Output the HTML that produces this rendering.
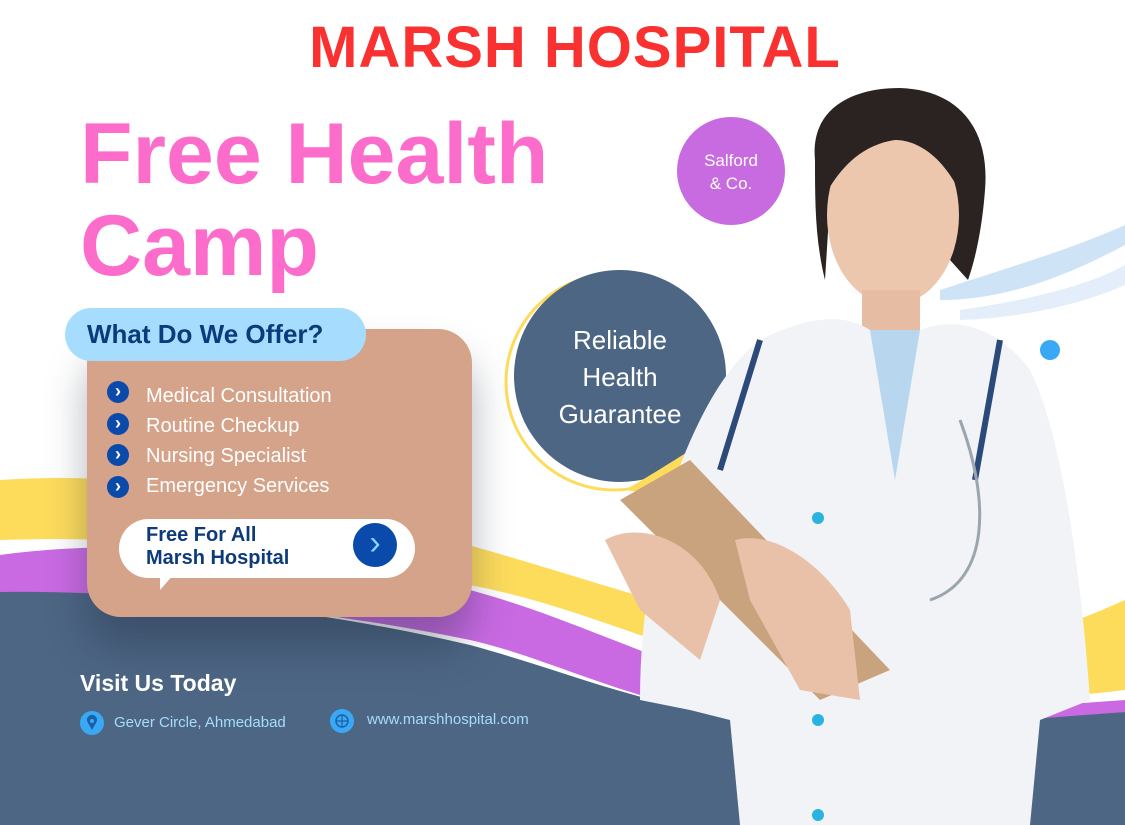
<!DOCTYPE html>
<html><head><meta charset="utf-8"><style>
*{margin:0;padding:0;box-sizing:border-box}
body{width:1125px;height:825px;overflow:hidden;background:#fff;position:relative;font-family:"Liberation Sans",sans-serif}
.a{position:absolute}
.b{position:absolute;left:107px;width:22px;height:22px;border-radius:50%;background:#0a4aab;color:#fff;font-size:18px;text-align:center;line-height:20px;font-weight:bold}
</style></head><body>
<svg class="a" style="left:0;top:0" width="1125" height="825">
<path d="M0 480 C150 470 300 500 450 540 C600 580 750 640 900 650 C1000 655 1080 620 1125 600 L1125 690 C1050 700 950 700 850 690 C700 670 600 610 470 585 C300 550 150 535 0 540Z" fill="#fddc5c"/>
<path d="M0 555 C150 535 330 555 470 590 C600 625 700 690 850 705 C950 715 1050 705 1125 700 L1125 712 C1000 725 900 730 800 725 C650 715 560 660 470 640 C300 605 150 595 0 600Z" fill="#c96ae3"/>
<path d="M0 592 C150 590 320 610 470 645 C580 675 650 710 780 722 C900 730 1020 720 1125 712 L1125 825 L0 825Z" fill="#4d6684"/>
<path d="M940 290 C1000 270 1070 250 1125 225 L1125 245 C1060 280 1000 300 940 300Z" fill="#cfe3f7"/>
<path d="M960 310 C1030 300 1090 285 1125 265 L1125 285 C1080 305 1020 318 960 320Z" fill="#e3eefa"/>
<circle cx="1050" cy="350" r="10" fill="#3aa9f5"/>
<circle cx="731" cy="171" r="54" fill="#c86ae0"/>
<circle cx="614" cy="382" r="108" fill="none" stroke="#fddc5c" stroke-width="3"/>
<circle cx="620" cy="376" r="106" fill="#4d6684"/>
<path d="M625 490 C660 470 690 450 715 435 L700 480 C680 490 650 495 625 490Z" fill="#fddc5c"/>
<path d="M815 160 C810 110 850 88 900 88 C960 90 990 130 985 190 C982 230 975 260 968 280 L950 260 C960 200 955 150 910 135 C870 128 835 150 830 200 L825 280 C815 240 815 200 815 160Z" fill="#2b2321"/>
<ellipse cx="893" cy="215" rx="66" ry="90" fill="#ecc7ae"/>
<path d="M828 190 C835 130 880 110 912 120 C950 130 968 170 970 215 C950 160 920 140 895 140 C860 145 840 170 828 190Z" fill="#2b2321"/>
<rect x="862" y="290" width="58" height="55" fill="#e6bda3"/>
<path d="M760 340 C800 320 840 310 870 330 L920 330 C960 315 1000 330 1030 370 C1060 430 1080 560 1090 700 L1040 720 L1030 825 L740 825 L730 720 L690 710 L640 700 C640 600 660 500 700 420 C720 380 740 355 760 340Z" fill="#f1f3f6"/>
<path d="M870 330 L895 480 L920 330Z" fill="#b8d7ee"/>
<path d="M760 340 L720 470 M1000 340 L975 480" stroke="#2b4a7a" stroke-width="6" fill="none"/>
<path d="M960 420 C990 500 990 580 930 600" stroke="#9aa5ad" stroke-width="3" fill="none"/>
<path d="M620 500 L690 460 L890 670 L820 700Z" fill="#c9a37d"/>
<path d="M605 540 C640 520 700 540 720 600 L700 660 L640 610Z" fill="#e9c1a8"/>
<path d="M735 540 C770 530 820 560 850 610 L860 700 L800 690 L750 600Z" fill="#e9c1a8"/>
<circle cx="818" cy="518" r="6" fill="#2bb3e0"/><circle cx="818" cy="720" r="6" fill="#2bb3e0"/><circle cx="818" cy="815" r="6" fill="#2bb3e0"/>
</svg>
<div class="a" style="left:0;width:1150px;top:14px;text-align:center;font-size:58px;font-weight:bold;color:#fa3131;letter-spacing:1px">MARSH HOSPITAL</div>
<div class="a" style="left:80px;top:108px;font-size:86px;font-weight:bold;color:#fc6ccb;line-height:92px">Free Health<br>Camp</div>
<div class="a" style="left:677px;top:149px;width:108px;text-align:center;font-size:17px;color:#fff;line-height:23px">Salford<br>&amp; Co.</div>
<div class="a" style="left:520px;top:322px;width:200px;text-align:center;font-size:26px;color:#fff;line-height:37px">Reliable<br>Health<br>Guarantee</div>
<div class="a" style="left:87px;top:329px;width:385px;height:288px;background:#d4a389;border-radius:34px;box-shadow:0 30px 40px rgba(30,40,60,.35)"></div>
<div class="a" style="left:65px;top:308px;width:301px;height:53px;background:#a6dcfd;border-radius:27px;font-size:26px;font-weight:bold;color:#0c3a7a;padding:11px 0 0 22px">What Do We Offer?</div>
<div class="a" style="left:146px;top:381px;font-size:20px;color:#fff;line-height:30px">
<div>Medical Consultation</div><div>Routine Checkup</div><div>Nursing Specialist</div><div>Emergency Services</div></div>
<div class="b" style="top:381px">›</div><div class="b" style="top:413px">›</div><div class="b" style="top:444px">›</div><div class="b" style="top:476px">›</div>
<div class="a" style="left:119px;top:519px;width:296px;height:59px;background:#fff;border-radius:30px"></div>
<div class="a" style="left:160px;top:574px;width:0;height:0;border-left:14px solid #fff;border-bottom:16px solid transparent"></div>
<div class="a" style="left:146px;top:524px;font-size:20px;font-weight:bold;color:#0c3a7a;line-height:23px">Free For All<br>Marsh Hospital</div>
<div class="a" style="left:353px;top:523px;width:44px;height:44px;border-radius:50%;background:#0a4aab;color:#8fd0ff;font-size:34px;text-align:center;line-height:40px">›</div>
<div class="a" style="left:80px;top:670px;font-size:23px;font-weight:bold;color:#fff">Visit Us Today</div>
<svg class="a" style="left:80px;top:711px" width="24" height="24"><circle cx="12" cy="12" r="12" fill="#3aa9f5"/><path d="M12 19 L7.5 11 A5 5 0 1 1 16.5 11Z" fill="#1a5fa8"/><circle cx="12" cy="10" r="2" fill="#3aa9f5"/></svg>
<div class="a" style="left:114px;top:714px;font-size:15px;color:#a6dcfd">Gever Circle, Ahmedabad</div>
<svg class="a" style="left:330px;top:709px" width="24" height="24"><circle cx="12" cy="12" r="12" fill="#3aa9f5"/><circle cx="12" cy="12" r="6" fill="none" stroke="#1a5fa8" stroke-width="1.5"/><path d="M6 12h12M12 6v12" stroke="#1a5fa8" stroke-width="1.2"/></svg>
<div class="a" style="left:367px;top:711px;font-size:15px;color:#a6dcfd">www.marshhospital.com</div>
</body></html>
